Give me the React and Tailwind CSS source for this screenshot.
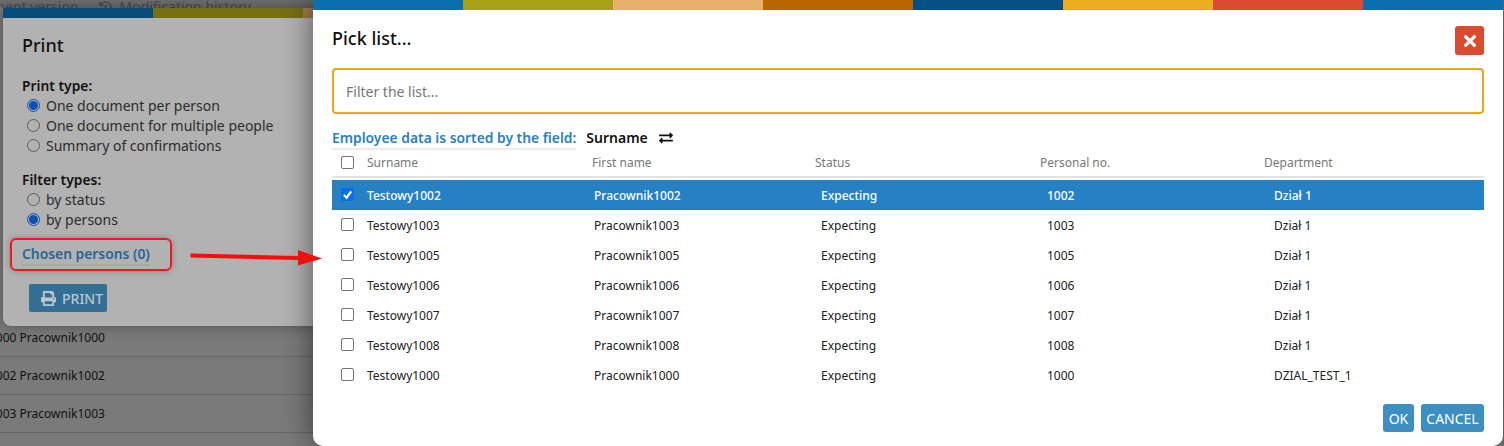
import { FaTimes, FaPrint, FaExchangeAlt, FaHistory } from 'react-icons/fa';

const stripe = ['bg-[#0a6fad]', 'bg-[#a8a017]', 'bg-[#e8b06c]', 'bg-[#bb6500]', 'bg-[#064f85]', 'bg-[#eaae1e]', 'bg-[#dc4a30]', 'bg-[#0a6fad]'];

const people = [
  ['Testowy1002', 'Pracownik1002', 'Expecting', '1002', 'Dział 1'],
  ['Testowy1003', 'Pracownik1003', 'Expecting', '1003', 'Dział 1'],
  ['Testowy1005', 'Pracownik1005', 'Expecting', '1005', 'Dział 1'],
  ['Testowy1006', 'Pracownik1006', 'Expecting', '1006', 'Dział 1'],
  ['Testowy1007', 'Pracownik1007', 'Expecting', '1007', 'Dział 1'],
  ['Testowy1008', 'Pracownik1008', 'Expecting', '1008', 'Dział 1'],
  ['Testowy1000', 'Pracownik1000', 'Expecting', '1000', 'DZIAL_TEST_1'],
];

function Radio({ label, checked }) {
  return (
    <div className="flex items-center h-5 pl-[5px]">
      <span className={`w-[13px] h-[13px] rounded-full border flex items-center justify-center ${checked ? 'border-[#0a50b0]' : 'border-[#5a5a5a]'}`}>
        {checked && <span className="w-[9px] h-[9px] rounded-full bg-[#0a50b0]" />}
      </span>
      <span className="ml-[6px] text-[14px] text-[#2c2c2c]">{label}</span>
    </div>
  );
}

function Check({ checked }) {
  if (checked) {
    return (
      <span className="w-[13px] h-[13px] rounded-[2px] bg-[#0b6cf0] flex items-center justify-center">
        <svg viewBox="0 0 12 12" className="w-[11px] h-[11px]">
          <path d="M2 6.5 L5 9.5 L10 2.5" fill="none" stroke="white" strokeWidth="2.4" />
        </svg>
      </span>
    );
  }
  return <span className="w-[13px] h-[13px] rounded-[2px] border border-[#767676] bg-white" />;
}

function PersonRow({ row, selected }) {
  return (
    <div className={`grid grid-cols-[35px_225px_224px_224px_226px_1fr] items-center h-[30px] text-[12px] ${selected ? 'bg-[#2680c4] text-white font-medium' : 'text-[#222]'}`}>
      <span className="flex pl-[9px] -mt-[1px]"><Check checked={selected} /></span>
      <span className="pt-[2px]">{row[0]}</span>
      <span className="pl-[2px] pt-[2px]">{row[1]}</span>
      <span className="pl-[5px] pt-[2px]">{row[2]}</span>
      <span className="pl-[7px] pt-[2px]">{row[3]}</span>
      <span className="pl-[8px] pt-[2px]">{row[4]}</span>
    </div>
  );
}

function BackRow({ text }) {
  return (
    <div className="h-[38px] flex items-center border-b border-[#666] text-[12px] text-[#111] whitespace-nowrap">
      <span className="-ml-[11px]">{text}</span>
    </div>
  );
}

export default function App() {
  return (
    <div className="relative w-[1504px] h-[446px] overflow-hidden bg-[#7a7a7a] font-['Noto_Sans',sans-serif]">
      {/* page behind the dialogs */}
      <div className="h-[8px] bg-[#6e6e6e] overflow-hidden flex items-end text-[14px] leading-[14px] text-[#4a4a4a] whitespace-nowrap">
        <span className="-ml-[8px] translate-y-[6px]">ment version</span>
        <FaHistory className="ml-[20px] translate-y-[6px] text-[13px]" />
        <span className="ml-[8px] translate-y-[6px]">Modification history</span>
      </div>
      <div className="pt-[311px] w-[313px]">
        <BackRow text="1000 Pracownik1000" />
        <BackRow text="1002 Pracownik1002" />
        <BackRow text="1003 Pracownik1003" />
      </div>

      {/* print dialog, dimmed */}
      <div className="absolute left-[3px] top-[8px] w-[340px] h-[318px] rounded-b-[8px] bg-[#b2b2b2] overflow-hidden shadow-[0_0_14px_rgba(0,0,0,0.35)]">
        <div className="flex h-[10px]">
          <div className="w-[150px] bg-[#054c78]" />
          <div className="w-[150px] bg-[#757012]" />
          <div className="w-[40px] bg-[#a27b4b]" />
        </div>
        <div className="pl-[19px] pt-[15px]">
          <h2 className="text-[18px] leading-[24px] font-medium text-[#111]">Print</h2>
          <p className="mt-[20px] text-[13.85px] leading-[18px] font-semibold text-[#111]">Print type:</p>
          <Radio label="One document per person" checked />
          <Radio label="One document for multiple people" />
          <Radio label="Summary of confirmations" />
          <p className="mt-[16px] text-[13.85px] leading-[18px] font-semibold text-[#111]">Filter types:</p>
          <Radio label="by status" />
          <Radio label="by persons" checked />
          <div className="mt-[15px] w-fit text-[13.85px] leading-[20px] font-semibold text-[#2a6496] border-b-2 border-[#a8a8a8]">Chosen persons (0)</div>
          <button className="mt-[18px] ml-[7px] flex items-center h-[28px] px-[12px] w-[78px] rounded-[2px] bg-[#336e94] text-[14px] font-medium text-[#b8c8d2]">
            <FaPrint className="text-[15px] mr-[6px] shrink-0" />
            PRINT
          </button>
        </div>
      </div>

      {/* red annotation box */}
      <div className="absolute left-[10px] top-[238px] w-[162px] h-[33px] rounded-[6px] border-2 border-[#f01818] shadow-[0_0_6px_rgba(0,0,0,0.25)]" />

      {/* pick list dialog */}
      <div className="absolute left-[313px] top-0 w-[1190px] h-[446px] overflow-hidden bg-white rounded-b-[10px] shadow-[0_0_30px_rgba(0,0,0,0.55)]">
        <div className="flex h-[10px]">
          {stripe.map((c, i) => (
            <div key={i} className={`w-[150px] shrink-0 ${c}`} />
          ))}
        </div>
        <div className="pl-[19px] pr-[19px]">
          <div className="flex items-start justify-between pt-[16px]">
            <h2 className="text-[18px] leading-[24px] font-medium text-[#111]">Pick list...</h2>
            <button className="w-[29px] h-[29px] rounded-[3px] bg-[#dc4a30] flex items-center justify-center text-white">
              <FaTimes className="text-[18px]" />
            </button>
          </div>
          <input
            placeholder="Filter the list..."
            className="mt-[13px] block w-full h-[46px] px-[12px] rounded-[4px] border-2 border-[#e6a917] text-[14px] outline-none placeholder:text-[#777]"
          />
          <div className="flex items-center mt-[14px] text-[13.85px] leading-[20px] font-semibold">
            <span className="text-[#2a80c4] border-b-2 border-[#ececec]">Employee data is sorted by the field:</span>
            <span className="ml-[10px] text-[14px] text-[#111] -mt-[2px]">Surname</span>
            <FaExchangeAlt className="ml-[11px] -mt-[2px] text-[14px] text-[#111]" />
          </div>
          <div className="grid grid-cols-[35px_225px_223px_225px_224px_1fr] items-center h-[28px] border-b-2 border-[#e2e2e2] text-[12px] text-[#777]">
            <span className="flex pl-[9px] -mt-[2px]"><Check /></span>
            <span>Surname</span>
            <span>First name</span>
            <span>Status</span>
            <span>Personal no.</span>
            <span>Department</span>
          </div>
          <div className="mt-[2px]">
            {people.map((row, i) => (
              <PersonRow key={row[3]} row={row} selected={i === 0} />
            ))}
          </div>
          <div className="flex justify-end gap-[7px] mt-[14px]">
            <button className="h-[28px] w-[31px] rounded-[3px] bg-[#3d8fc1] text-[14px] text-white">OK</button>
            <button className="h-[28px] w-[63px] rounded-[3px] bg-[#3d8fc1] text-[14px] text-white">CANCEL</button>
          </div>
        </div>
      </div>

      {/* red arrow */}
      <svg className="absolute left-[185px] top-[245px]" width="145" height="25" viewBox="0 0 145 25">
        <path d="M5.5 8.5 L113 11 L113 5 L137 13.5 L113 20.5 L113 15 L5.5 12.5 Z" fill="#f40f0f" />
      </svg>
    </div>
  );
}
